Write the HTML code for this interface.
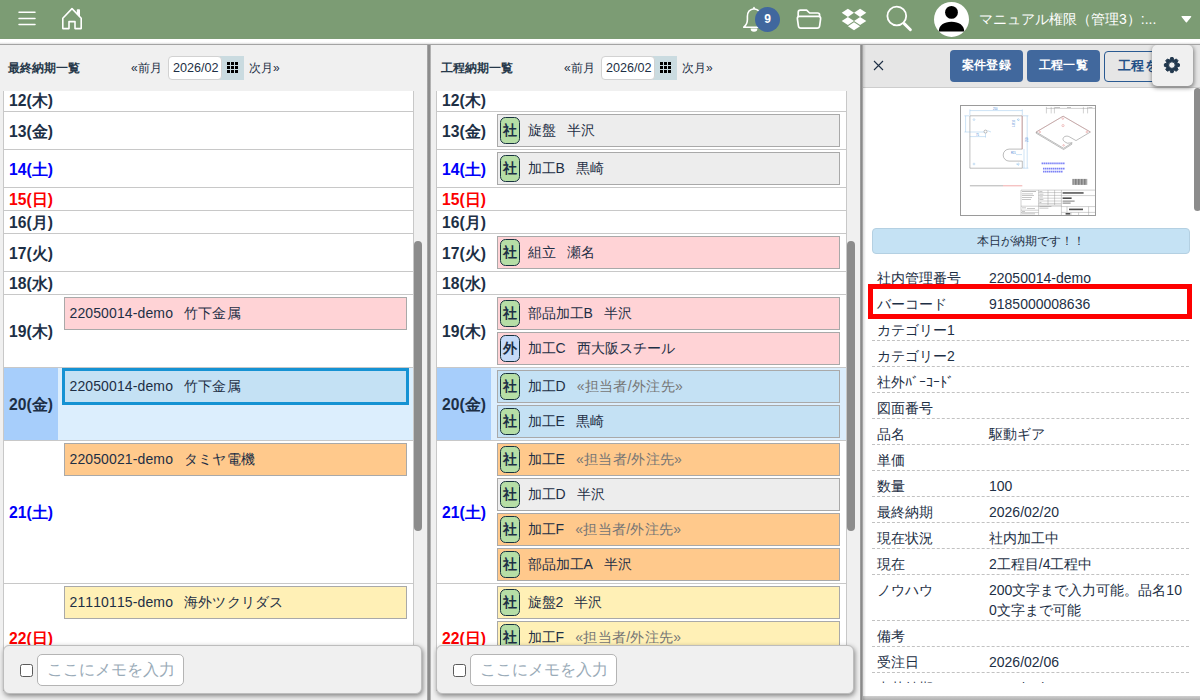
<!DOCTYPE html>
<html lang="ja">
<head>
<meta charset="utf-8">
<title>納期一覧</title>
<style>
*{box-sizing:border-box;margin:0;padding:0}
html,body{width:1200px;height:700px;overflow:hidden;background:#f0f0f0;font-family:"Liberation Sans",sans-serif;color:#1d2f45;font-kerning:none}
#top{position:absolute;left:0;top:0;width:1200px;height:39px;background:#7c9c74}
#topgap{position:absolute;z-index:5;left:0;top:39px;width:1200px;height:5.5px;background:linear-gradient(#fff 0,#fff 60%,#e0e0e0 100%);border-bottom:1px solid #a4a4a4}
.panel{position:absolute;top:44px;height:656px;background:#f0f0f0;overflow:hidden}
#p1{left:0;width:427px}
#p2{left:433px;width:427px}
#p3{left:863px;width:337px;background:#fff}
.vdiv{position:absolute;top:44px;height:656px;width:4px;background:linear-gradient(90deg,#c4c4c4 0,#8c8c8c 22%,#8c8c8c 72%,#d0d0d0 100%)}
.ptitle{position:absolute;left:8px;top:17px;font-size:12px;line-height:14px;font-weight:bold;color:#26384a;white-space:nowrap}
.nav{position:absolute;top:16.5px;font-size:12px;line-height:14px;color:#1d2f45;white-space:nowrap}
.dinput{position:absolute;left:168px;top:12px;height:24px;width:54px;background:#fff;border:1px solid #d2d2d2;border-radius:4px;font-size:12.6px;line-height:22px;padding-left:4px;color:#1d2f45}
.dbtn{position:absolute;left:218px;top:12px;height:24px;width:26px;background:#cadbe0}
.dbtn i{position:absolute;left:9px;top:6px;width:11px;height:11px;background:
 linear-gradient(#000,#000) 0 0/3px 3px no-repeat,linear-gradient(#000,#000) 4px 0/3px 3px no-repeat,linear-gradient(#000,#000) 8px 0/3px 3px no-repeat,
 linear-gradient(#000,#000) 0 4px/3px 3px no-repeat,linear-gradient(#000,#000) 4px 4px/3px 3px no-repeat,linear-gradient(#000,#000) 8px 4px/3px 3px no-repeat,
 linear-gradient(#000,#000) 0 8px/3px 3px no-repeat,linear-gradient(#000,#000) 4px 8px/3px 3px no-repeat,linear-gradient(#000,#000) 8px 8px/3px 3px no-repeat}
.tbl{position:absolute;left:3px;top:47px;width:411px;height:600px;background:#fff;border-left:1px solid #c8c8c8;border-right:1px solid #c8c8c8;overflow:hidden}
.row{position:absolute;left:0;right:0;border-bottom:1px solid #c8c8c8}
.row.hl{background:#dceefd}
.day{position:absolute;left:0;width:54px;top:0;bottom:0;font-size:15.7px;font-weight:bold;padding-left:5px;padding-top:3.6px;display:flex;align-items:center;color:#1d2f45;white-space:nowrap}
.row.hl .day{background:#a7cefb}
.sat{color:#0000fa}.sun{color:#fc0000}
.item{position:absolute;left:60px;width:343px;height:33px;border:1px solid #a9a9a9;font-size:14px;line-height:31px;color:#1d2f45;white-space:nowrap;padding-left:4.5px;letter-spacing:.12px}
.item.m{padding-left:29.5px;letter-spacing:0}
.gap{display:inline-block;width:11.2px}
.pink{background:#ffd3d6}.blue{background:#c4e1f4}.orange{background:#ffc98c}.yellow{background:#fff0b6}.grey{background:#ededed}
.sel{border-color:#1592d3;outline:2px solid #1592d3}
.badge{position:absolute;left:2px;top:2px;width:20px;height:27px;border:1.5px solid #17323f;border-radius:5.5px;background:#b6dea6;font-size:14px;font-weight:bold;line-height:25px;text-align:center;color:#1d2f45}
.badge.out{background:#c5daf8}
.ph{color:#757575;letter-spacing:.3px}
.memo{position:absolute;left:3px;top:601px;width:418px;height:49px;background:#f0f0f0;border:1px solid #bdbdbd;border-radius:6px;box-shadow:1px 2px 5px rgba(0,0,0,.45)}
#p1 .memo{width:419px}
.memo .cb{position:absolute;left:16px;top:18px;width:13px;height:13px;border:1px solid #5a5a5a;border-radius:2.5px;background:#fff}
.memo .inp{position:absolute;left:33px;top:8px;width:147px;height:32px;border:1px solid #b4b4b4;border-radius:5px;background:#fff;font-size:16px;line-height:30px;padding-left:8.5px;color:#9aabb8;white-space:nowrap;overflow:hidden}
.sb{position:absolute;width:7px;border-radius:4px;background:#8c8c8c}

.rhead{position:absolute;left:0;top:0;width:337px;height:44px;background:#e6e6e6;border-top:1px solid #bdbdbd;border-bottom:1px solid #cdcdcd}
.xic{position:absolute;left:9.2px;top:15.4px}
.btn{position:absolute;top:6px;height:32px;width:73px;border-radius:4px;background:#41689d;color:#fff;font-size:12px;letter-spacing:.3px;font-weight:bold;line-height:31px;text-align:center;white-space:nowrap;overflow:hidden}
.btn.ol{background:#e6e6e6;border:1.5px solid #2a5a92;color:#235087;width:70px;height:31px;top:6.5px;line-height:27.5px;text-align:left;padding-left:13px;font-size:13px}
.rbody{position:absolute;left:0;top:44px;width:337px;height:595px;overflow:hidden;background:#fff}
.thumb{position:absolute;left:97px;top:17px;width:136px;height:111px;border:1px solid #9a9a9a;background:#fff}
.banner{position:absolute;left:8.5px;top:139.5px;width:318px;height:26.5px;background:#c5e2f4;border:1px solid #b4d0e2;border-radius:4px;font-size:12px;line-height:25px;text-align:center;color:#1d2f45}
.dlist{position:absolute;left:9px;top:175px;width:317px}
.dr{position:relative;min-height:26px;border-bottom:1px dashed #c2c2c2;padding:4.5px 0 .5px 5px;font-size:14px;line-height:20px;color:#1d2f45}
.dl{position:absolute;left:5px;top:4.5px;white-space:nowrap}
.dv{margin-left:112px;min-height:20px;word-break:break-all}
.redbox{position:absolute;left:4.5px;top:195.5px;width:324px;height:35.5px;border:5px solid #fe0000}
#p3:after{content:"";position:absolute;left:0;top:0;width:3px;height:656px;background:linear-gradient(90deg,rgba(0,0,0,.14),rgba(0,0,0,0))}
.rfoot{position:absolute;left:0;top:651.5px;width:337px;height:5px;background:linear-gradient(#cfcfcf,#a8a8a8)}
.gear{position:absolute;left:289px;top:1px;width:41px;height:41px;border-radius:5px;background:#f0f0f0;box-shadow:0.5px 1.5px 4px rgba(0,0,0,.45)}
</style>
</head>
<body>
<div id="top">
<svg width="1200" height="39" viewBox="0 0 1200 39" style="position:absolute;left:0;top:0" fill="none" stroke="#fff" stroke-linecap="round" stroke-linejoin="round">
 <!-- hamburger -->
 <g stroke-width="1.5"><path d="M19 12.2H35M19 18.4H35M19 24.6H35"/></g>
 <!-- home -->
 <path stroke-width="1.6" d="M62.8 18.2 72 8.6 81.2 18.2V28.6H75V21.6H69V28.6H62.8Z"/>
 <path stroke-width="1.6" d="M77.6 14.2V10H79.2V15.8"/>
 <!-- bell -->
 <path stroke-width="1.6" d="M743.8 27.2H764.2C762 25.4 760.6 23 760.6 19.6V16.4C760.6 12.6 758.2 9.4 754 8.8 749.8 9.4 747.4 12.6 747.4 16.4V19.6C747.4 23 746 25.4 743.8 27.2Z"/>
 <path stroke-width="1.5" d="M754 8.6V7.6"/>
 <path stroke="none" fill="#fff" d="M750.6 28.6H757.4A3.4 3.2 0 0 1 750.6 28.6Z"/>
 <circle cx="767.5" cy="19.5" r="12.5" fill="#40679e" stroke="none"/>
 <!-- folder -->
 <path stroke-width="1.7" d="M798.2 16.4V12.4C798.2 11 799.2 10.2 800.4 10.2H806.6L809.6 13H817.6C818.8 13 819.6 13.8 819.6 15V16.4"/>
 <path stroke-width="1.7" d="M799.4 16.4H818.6C820 16.4 820.8 17.4 820.6 18.8L819.6 26C819.4 27.4 818.6 28.2 817.2 28.2H800.8C799.4 28.2 798.6 27.4 798.4 26L797.4 18.8C797.2 17.4 798 16.4 799.4 16.4Z"/>
 <!-- dropbox -->
 <g fill="#fff" stroke="none">
  <path d="M847.9 8.7 854 12.8 847.9 16.9 841.7 12.8Z"/><path d="M860.1 8.7 866.3 12.8 860.1 16.9 854 12.8Z"/>
  <path d="M847.9 16.9 854 21 847.9 25.1 841.7 21Z"/><path d="M860.1 16.9 866.3 21 860.1 25.1 854 21Z"/>
  <path d="M854 22.3 860.1 26.3 854 30.3 847.9 26.3Z"/>
 </g>
 <!-- search -->
 <circle cx="896.8" cy="16" r="9.4" stroke-width="1.8"/>
 <path stroke-width="2.9" d="M904.2 23.6 910.4 29.8"/>
 <!-- avatar -->
 <circle cx="951.5" cy="19.4" r="17.5" fill="#fff" stroke="none"/>
 <circle cx="951.5" cy="12.4" r="6.4" fill="#000" stroke="none"/>
 <path fill="#000" stroke="none" d="M938.8 31.6C938.8 25.2 944 21.8 951.5 21.8S964.2 25.2 964.2 31.6Z"/>
 <!-- caret -->
 <path fill="#fff" stroke="#fff" stroke-width="1.4" d="M1182.2 16.6H1190.6L1186.4 21.8Z"/>
</svg>
<div style="position:absolute;left:755px;top:7px;width:25px;height:25px;line-height:25px;text-align:center;color:#fff;font-weight:bold;font-size:12px">9</div>
<div style="position:absolute;left:979px;top:0;height:39px;line-height:39px;color:#fff;font-size:14px;white-space:nowrap">マニュアル権限（管理3）:...</div>
</div>
<div id="topgap"></div>
<div class="vdiv" style="left:427px"></div>
<div class="vdiv" style="left:860px;width:3px;background:linear-gradient(90deg,#b4b4b4 0,#8a8a8a 30%,#8a8a8a 70%,#c4c4c4 100%)"></div>

<div class="panel" id="p1">
<div class="ptitle">最終納期一覧</div>
<div class="nav" style="left:131px">«前月</div>
<div class="dbtn"><i></i></div>
<div class="dinput">2026/02</div>
<div class="nav" style="left:249px">次月»</div>
<div class="tbl">
<div class="row" style="top:-2px;height:23px"><div class="day ">12(木)</div>
</div>
<div class="row" style="top:21px;height:38px"><div class="day ">13(金)</div>
</div>
<div class="row" style="top:59px;height:38px"><div class="day sat">14(土)</div>
</div>
<div class="row" style="top:97px;height:23px"><div class="day sun">15(日)</div>
</div>
<div class="row" style="top:120px;height:23px"><div class="day ">16(月)</div>
</div>
<div class="row" style="top:143px;height:38px"><div class="day ">17(火)</div>
</div>
<div class="row" style="top:181px;height:23px"><div class="day ">18(水)</div>
</div>
<div class="row" style="top:204px;height:73px"><div class="day ">19(木)</div>
<div class="item pink" style="top:2px">22050014-demo<span class="gap"></span>竹下金属</div>
</div>
<div class="row hl" style="top:277px;height:73px"><div class="day ">20(金)</div>
<div class="item blue sel" style="top:2px">22050014-demo<span class="gap"></span>竹下金属</div>
</div>
<div class="row" style="top:350px;height:143px"><div class="day sat">21(土)</div>
<div class="item orange" style="top:2px">22050021-demo<span class="gap"></span>タミヤ電機</div>
</div>
<div class="row" style="top:493px;height:108px"><div class="day sun">22(日)</div>
<div class="item yellow" style="top:2px">21110115-demo<span class="gap"></span>海外ツクリダス</div>
</div>
</div>
<div class="sb" style="left:414.3px;top:197px;height:290px;width:7.5px"></div>
<div class="memo"><span class="cb"></span><span class="inp">ここにメモを入力</span></div>
</div>
<div class="panel" id="p2">
<div class="ptitle">工程納期一覧</div>
<div class="nav" style="left:131px">«前月</div>
<div class="dbtn"><i></i></div>
<div class="dinput">2026/02</div>
<div class="nav" style="left:249px">次月»</div>
<div class="tbl">
<div class="row" style="top:-2px;height:23px"><div class="day ">12(木)</div>
</div>
<div class="row" style="top:21px;height:38px"><div class="day ">13(金)</div>
<div class="item m grey" style="top:2px"><span class="badge">社</span>旋盤<span class="gap"></span>半沢</div>
</div>
<div class="row" style="top:59px;height:38px"><div class="day sat">14(土)</div>
<div class="item m grey" style="top:2px"><span class="badge">社</span>加工B<span class="gap"></span>黒崎</div>
</div>
<div class="row" style="top:97px;height:23px"><div class="day sun">15(日)</div>
</div>
<div class="row" style="top:120px;height:23px"><div class="day ">16(月)</div>
</div>
<div class="row" style="top:143px;height:38px"><div class="day ">17(火)</div>
<div class="item m pink" style="top:2px"><span class="badge">社</span>組立<span class="gap"></span>瀬名</div>
</div>
<div class="row" style="top:181px;height:23px"><div class="day ">18(水)</div>
</div>
<div class="row" style="top:204px;height:73px"><div class="day ">19(木)</div>
<div class="item m pink" style="top:2px"><span class="badge">社</span>部品加工B<span class="gap"></span>半沢</div>
<div class="item m pink" style="top:37px"><span class="badge out">外</span>加工C<span class="gap"></span>西大阪スチール</div>
</div>
<div class="row hl" style="top:277px;height:73px"><div class="day ">20(金)</div>
<div class="item m blue" style="top:2px"><span class="badge">社</span>加工D<span class="gap"></span><span class="ph">«担当者/外注先»</span></div>
<div class="item m blue" style="top:37px"><span class="badge">社</span>加工E<span class="gap"></span>黒崎</div>
</div>
<div class="row" style="top:350px;height:143px"><div class="day sat">21(土)</div>
<div class="item m orange" style="top:2px"><span class="badge">社</span>加工E<span class="gap"></span><span class="ph">«担当者/外注先»</span></div>
<div class="item m grey" style="top:37px"><span class="badge">社</span>加工D<span class="gap"></span>半沢</div>
<div class="item m orange" style="top:72px"><span class="badge">社</span>加工F<span class="gap"></span><span class="ph">«担当者/外注先»</span></div>
<div class="item m orange" style="top:107px"><span class="badge">社</span>部品加工A<span class="gap"></span>半沢</div>
</div>
<div class="row" style="top:493px;height:108px"><div class="day sun">22(日)</div>
<div class="item m yellow" style="top:2px"><span class="badge">社</span>旋盤2<span class="gap"></span>半沢</div>
<div class="item m yellow" style="top:37px"><span class="badge">社</span>加工F<span class="gap"></span><span class="ph">«担当者/外注先»</span></div>
<div class="item m yellow" style="top:72px"><span class="badge">社</span>加工G<span class="gap"></span>黒崎</div>
</div>
</div>
<div class="sb" style="left:414.3px;top:197px;height:290px;width:7.5px"></div>
<div class="memo"><span class="cb"></span><span class="inp">ここにメモを入力</span></div>
</div>
</div>
<div class="panel" id="p3">
<div class="rhead"></div>
<svg class="xic" width="13" height="13" viewBox="0 0 13 13"><path d="M2 2 11 11M11 2 2 11" stroke="#1d2f45" stroke-width="1.1" fill="none"/></svg>
<div class="btn" style="left:87px">案件登録</div>
<div class="btn" style="left:164px">工程一覧</div>
<div class="btn ol" style="left:241px">工程を登録</div>
<div class="rbody">
<div class="thumb"><svg width="134" height="109" viewBox="0 0 134 109" style="position:absolute;left:0;top:0" fill="none">
<g stroke="#6b6b6b" stroke-width=".45">
 <path d="M8.9 9.8H61.3V43.1H48.2A6 6 0 0 0 48.2 55.1H61.3V62.2H8.9Z"/>
 <circle cx="24.5" cy="25.6" r="1.5"/>
 <path d="M75.2 26 102.1 10.2 129.4 26 115 34.6 108.4 30.8C105.6 29.2 101.8 30.6 102 33.4 102.2 35.2 104.4 36.2 106.4 37.2L111.2 36.8 102.6 42.3Z"/>
 <path d="M75.2 26V27.2L102.6 43.5 111.2 38"/>
</g>
<g stroke="#e08080" stroke-width=".45"><path d="M61 9.8V43.1"/><path d="M75.2 26 102.1 10.2 129.4 26" opacity=".7"/>
 <circle cx="101.8" cy="12.6" r=".8"/><circle cx="78.8" cy="26" r=".8"/><circle cx="125.8" cy="26" r=".8"/><circle cx="102" cy="19.6" r="1.1"/><circle cx="102.6" cy="39.4" r=".8"/></g>
<g stroke="#7fb6e6" stroke-width=".4">
 <path d="M8.9 4.6H61.3M8.9 3.4V9M61.3 3.4V9"/>
 <path d="M4.6 9.8V26M3.4 9.8H8.4M3.4 26H23"/>
 <path d="M8.9 30.6H24.5M24.5 27.4V31.6"/>
 <path d="M66.2 9.8V62.2M61.8 9.8H67.4M61.8 62.2H67.4"/>
 <path d="M63 43.1V62.2M55 48.6H61"/>
 <path d="M56 13.4 58.2 14.6M55 57.8 58 59.4M26.4 24.6 30 26"/>
 <circle cx="13" cy="13.6" r=".9"/><circle cx="57.4" cy="13.6" r=".9"/><circle cx="13" cy="58" r=".9"/><circle cx="57.4" cy="58" r=".9"/>
</g>
<g fill="#3a7bd0" font-family="Liberation Sans,sans-serif" font-size="2.6"><text x="32" y="3.8">250</text><text x="66.6" y="36" transform="rotate(-90 66.6 36)">250</text><text x="54" y="21" transform="rotate(-90 54 21)">4-R10</text><text x="15" y="29.8">75</text><text x="50" y="47.6">R15</text></g>
<g stroke="#2b35f0" stroke-width="1.7" stroke-dasharray="1.5 .45" opacity=".62"><path d="M80.6 57.4H104M82 62.7H104M82 65.6H102"/></g>
<g fill="#555"><rect x="111.4" y="72.9" width="14.8" height="6" fill="url(#bc)"/></g>
<defs><pattern id="bc" width="1.5" height="6" patternUnits="userSpaceOnUse"><rect width=".55" height="6" fill="#444"/><rect x=".9" width=".3" height="6" fill="#444"/></pattern></defs>
<path d="M8.9 79.8H42" stroke="#a8a8a8" stroke-width=".9"/><path d="M42 79.8H61.3" stroke="#f0a0a0" stroke-width=".9"/>
<g stroke="#8a8a8a" stroke-width=".4">
 <path d="M60 109V84.1H134"/>
 <path d="M77.6 84.1V109M100.4 84.1V109M60 100.2H100.4M60 104.2H77.6M60 106.6H77.6M77.6 99H100.4"/>
 <path d="M77.6 86.6H100.4M77.6 89.4H100.4M77.6 92.2H100.4M77.6 95H100.4M77.6 97.4H100.4M87 84.1V99M93.6 84.1V99"/>
 <path d="M100.4 89.6H134M100.4 100.6H134M100.4 106.4H134M127.6 100.6V109M106 100.6V106.4M110 106.4V109M117.6 106.4V109"/>
 <path d="M85.4 .9V7.4M85.4 2.4H134M90.2 .9V7.4M93.4 .9V7.4M122.4 .9V7.4M126.6 .9V7.4"/>
</g>
<g fill="#222"><rect x="101.6" y="86.2" width="21" height="1.5" opacity=".8"/><rect x="101.6" y="91.4" width="9" height="1.6" opacity=".8"/><rect x="101.6" y="94.6" width="12" height="1" opacity=".6"/><rect x="101.6" y="96.6" width="8" height="1" opacity=".6"/><rect x="108" y="102.6" width="14" height="1.6" opacity=".8"/><rect x="104.6" y="107" width="4.6" height="1.6" opacity=".8"/></g>
<g fill="#666" opacity=".6"><rect x="61" y="85" width="14" height=".7"/><rect x="61" y="87.6" width="11" height=".6"/><rect x="61" y="89.4" width="12" height=".6"/><rect x="61" y="91.2" width="10" height=".6"/><rect x="61" y="93" width="9" height=".6"/><rect x="61" y="101.6" width="4" height=".6"/><rect x="66" y="102.2" width="8" height=".6"/><rect x="61" y="105" width="3" height=".6"/><rect x="61" y="107.6" width="13" height=".6"/><rect x="78.4" y="85.2" width="3" height=".6"/><rect x="78.4" y="87.8" width="4" height=".6"/><rect x="78.4" y="90.6" width="3.4" height=".6"/><rect x="78.4" y="93.4" width="4" height=".6"/><rect x="78.4" y="96" width="2" height=".6"/><rect x="78.4" y="100.2" width="12" height=".6"/><rect x="78.4" y="101.8" width="9" height=".6"/><rect x="94" y="1.4" width="5" height=".6"/><rect x="106" y="1.2" width="4" height=".6"/><rect x="127.4" y="1.4" width="4" height=".6"/></g>
</svg></div>
<div class="banner">本日が納期です！！</div>
<div class="dlist">
<div class="dr"><div class="dl">社内管理番号</div><div class="dv">22050014-demo</div></div>
<div class="dr"><div class="dl">バーコード</div><div class="dv">9185000008636</div></div>
<div class="dr"><div class="dl">カテゴリー1</div><div class="dv"></div></div>
<div class="dr"><div class="dl">カテゴリー2</div><div class="dv"></div></div>
<div class="dr"><div class="dl">社外ﾊﾞｰｺｰﾄﾞ</div><div class="dv"></div></div>
<div class="dr"><div class="dl">図面番号</div><div class="dv"></div></div>
<div class="dr"><div class="dl">品名</div><div class="dv">駆動ギア</div></div>
<div class="dr"><div class="dl">単価</div><div class="dv"></div></div>
<div class="dr"><div class="dl">数量</div><div class="dv">100</div></div>
<div class="dr"><div class="dl">最終納期</div><div class="dv">2026/02/20</div></div>
<div class="dr"><div class="dl">現在状況</div><div class="dv">社内加工中</div></div>
<div class="dr"><div class="dl">現在</div><div class="dv">2工程目/4工程中</div></div>
<div class="dr"><div class="dl">ノウハウ</div><div class="dv">200文字まで入力可能。品名100文字まで可能</div></div>
<div class="dr"><div class="dl">備考</div><div class="dv"></div></div>
<div class="dr"><div class="dl">受注日</div><div class="dv">2026/02/06</div></div>
<div class="dr"><div class="dl">出荷納期</div><div class="dv">2026/02/20</div></div>
</div>
<div class="redbox"></div>
</div>
<div class="sb" style="left:331px;top:44px;height:123px;width:7px"></div>
<div class="rfoot"></div>
<div class="gear"><svg width="41" height="41" viewBox="0 0 41 41"><g transform="translate(19.9 20.1)"><path fill="#22384e" fill-rule="evenodd" stroke="#22384e" stroke-width="1" stroke-linejoin="round" d="M-1.79 -5.52 L-1.19 -7.51 L1.19 -7.51 L1.79 -5.52 L2.63 -5.17 L4.47 -6.15 L6.15 -4.47 L5.17 -2.63 L5.52 -1.79 L7.51 -1.19 L7.51 1.19 L5.52 1.79 L5.17 2.63 L6.15 4.47 L4.47 6.15 L2.63 5.17 L1.79 5.52 L1.19 7.51 L-1.19 7.51 L-1.79 5.52 L-2.63 5.17 L-4.47 6.15 L-6.15 4.47 L-5.17 2.63 L-5.52 1.79 L-7.51 1.19 L-7.51 -1.19 L-5.52 -1.79 L-5.17 -2.63 L-6.15 -4.47 L-4.47 -6.15 L-2.63 -5.17Z M3.3 0A3.3 3.3 0 1 0 -3.3 0A3.3 3.3 0 1 0 3.3 0Z"/></g></svg></div>
</div>
</body>
</html>
